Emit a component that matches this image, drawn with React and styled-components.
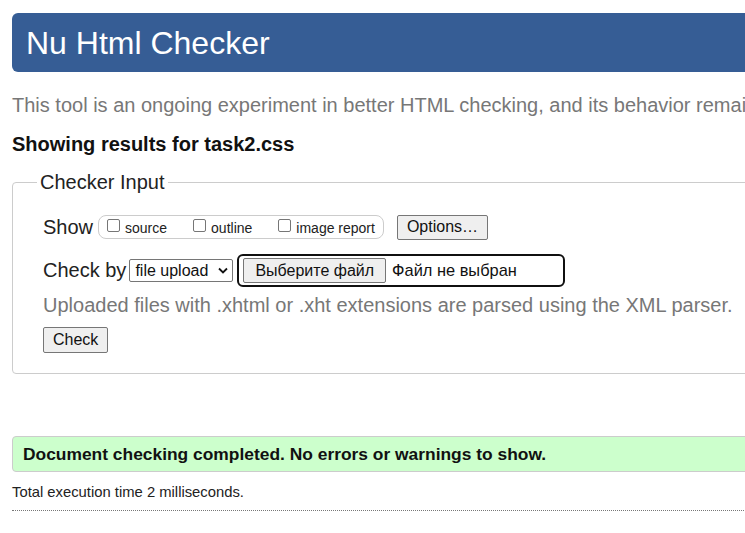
import styled, { createGlobalStyle } from 'styled-components'

const GlobalStyle = createGlobalStyle`
    html, body {
        margin: 0;
        padding: 0;
        overflow: hidden;
        background: #ffffff;
    }
    body {
        font-family: "Liberation Sans", Arial, sans-serif;
        color: #111111;
    }
`

const Page = styled.div`
    width: 1000px;
    padding: 13px 12px 20px 12px;
    display: flex;
    flex-direction: column;
`

const Header = styled.h1`
    margin: 0;
    height: 59px;
    background-color: #365d95;
    border-radius: 6px;
    padding-left: 14px;
    color: #ffffff;
    font-size: 32px;
    font-weight: 400;
    line-height: 60px;
`

const Intro = styled.p`
    margin: 22px 0 0 0;
    font-size: 20px;
    line-height: 23px;
    color: #777777;
    white-space: nowrap;
`

const Showing = styled.h2`
    margin: 16px 0 0 0;
    font-size: 20px;
    font-weight: 700;
    line-height: 23px;
    color: #111111;
`

const Fieldset = styled.fieldset`
    margin: 15px 0 0 0;
    padding: 19px 0 20px 30px;
    border: 1px solid #cccccc;
    border-radius: 4px;
    display: flex;
    flex-direction: column;
`

const Legend = styled.legend`
    margin-left: -6px;
    padding: 0 3px 0 3px;
    font-size: 20px;
    line-height: 23px;
    color: #222222;
`

const Row = styled.div`
    display: flex;
    align-items: center;
    height: ${p => p.$h || 26}px;
    margin-top: ${p => p.$mt || 0}px;
`

const Label = styled.span`
    font-size: 20px;
    color: #222222;
    margin-right: ${p => p.$mr || 5}px;
`

const Pill = styled.div`
    display: flex;
    align-items: center;
    gap: 26px;
    height: 22px;
    padding: 0 8px 0 8px;
    border: 1px solid #cccccc;
    border-radius: 8px;
    margin-right: 13px;
`

const CheckItem = styled.label`
    display: flex;
    align-items: center;
    font-size: 14px;
    color: #222222;
    padding-top: 2px;
`

const Box = styled.span`
    width: 13px;
    height: 13px;
    border: 1px solid #767676;
    border-radius: 2px;
    box-sizing: border-box;
    margin-right: 5px;
    margin-top: -6px;
    background: #ffffff;
`

const Button = styled.button`
    font-family: "Liberation Sans", Arial, sans-serif;
    font-size: 16px;
    color: #111111;
    background-color: #efefef;
    border: 1px solid #767676;
    border-radius: 2px;
    height: ${p => p.$h || 25}px;
    padding: 0 ${p => p.$px || 8}px;
    line-height: 1;
`

const Select = styled.div`
    display: flex;
    align-items: center;
    justify-content: space-between;
    width: 104px;
    height: 23px;
    box-sizing: border-box;
    padding: 0 4px 0 5px;
    border: 1px solid #767676;
    border-radius: 2px;
    font-size: 16px;
    color: #111111;
    margin-right: 4px;
`

const FileBox = styled.div`
    display: flex;
    align-items: center;
    width: 328px;
    height: 33px;
    box-sizing: border-box;
    padding-left: 4px;
    border: 2px solid #101010;
    border-radius: 6px;
`

const FileName = styled.span`
    font-size: 16.4px;
    color: #111111;
    margin-left: 6px;
`

const Hint = styled.p`
    margin: 7px 0 0 0;
    font-size: 20px;
    line-height: 23px;
    color: #777777;
`

const Result = styled.div`
    margin-top: 62px;
    height: 36px;
    box-sizing: border-box;
    display: flex;
    align-items: center;
    padding-left: 10px;
    background-color: #ccffcc;
    border: 1px solid #cccccc;
    border-radius: 4px;
    font-size: 17.4px;
    font-weight: 700;
    color: #111111;
`

const Time = styled.p`
    margin: 12px 0 0 0;
    font-size: 14.8px;
    line-height: 16px;
    color: #222222;
`

const Rule = styled.hr`
    margin: 10px 0 0 0;
    border: none;
    border-top: 1px dotted #777777;
`

const Chevron = () => (
    <svg width="10" height="7" viewBox="0 0 10 7">
        <path d="M1 1.5 L5 5.5 L9 1.5" fill="none" stroke="#111" strokeWidth="1.8" />
    </svg>
)

const App = () => {
    const options = ['source', 'outline', 'image report']
    return (
        <>
            <GlobalStyle />
            <Page>
                <Header>Nu Html Checker</Header>
                <Intro>This tool is an ongoing experiment in better HTML checking, and its behavior remains subject to change</Intro>
                <Showing>Showing results for task2.css</Showing>
                <Fieldset>
                    <Legend>Checker Input</Legend>
                    <Row $h={28}>
                        <Label>Show</Label>
                        <Pill>
                            {options.map(o => (
                                <CheckItem key={o}><Box />{o}</CheckItem>
                            ))}
                        </Pill>
                        <Button $px={9}>Options…</Button>
                    </Row>
                    <Row $h={33} $mt={13}>
                        <Label $mr={3}>Check by</Label>
                        <Select>file upload <Chevron /></Select>
                        <FileBox>
                            <Button $px={11}>Выберите файл</Button>
                            <FileName>Файл не выбран</FileName>
                        </FileBox>
                    </Row>
                    <Hint>Uploaded files with .xhtml or .xht extensions are parsed using the XML parser.</Hint>
                    <Row $h={27} $mt={9}>
                        <Button $h={26} $px={9}>Check</Button>
                    </Row>
                </Fieldset>
                <Result>Document checking completed. No errors or warnings to show.</Result>
                <Time>Total execution time 2 milliseconds.</Time>
                <Rule />
            </Page>
        </>
    )
}

export default App
